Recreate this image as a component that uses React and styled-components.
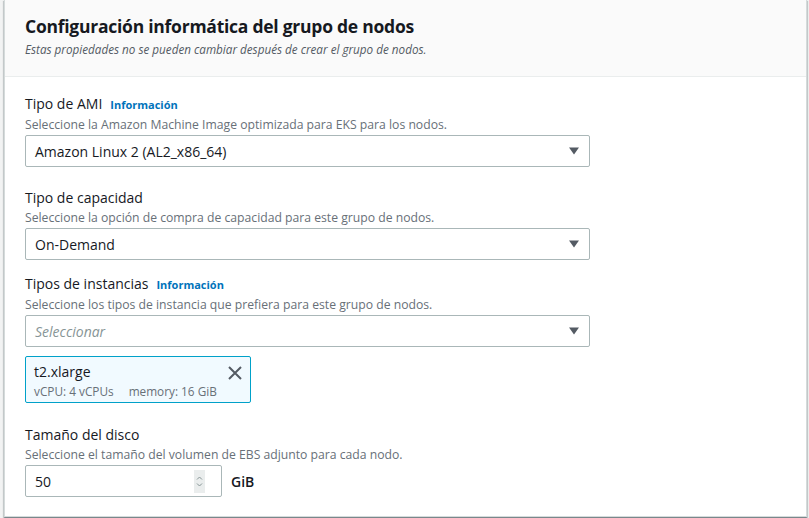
import React from "react";
import styled, { createGlobalStyle } from "styled-components";

const Global = createGlobalStyle`
  html, body { margin: 0; padding: 0; background: #f2f3f3; }
  body { font-family: "Open Sans", "Noto Sans", sans-serif; color: #16191f; }
  * { box-sizing: border-box; }
`;

const Page = styled.div`
  width: 809px;
  height: 518px;
  overflow: hidden;
  padding: 0 2px 0 4px;
`;

const Panel = styled.section`
  background: #fff;
  border: 1px solid #d5dbdb;
  border-top: none;
  box-shadow: 0 1px 1px 0 rgba(0, 28, 36, 0.3), 1px 1px 1px 0 rgba(0, 28, 36, 0.15),
    -1px 1px 1px 0 rgba(0, 28, 36, 0.15);
  height: 517px;
`;

const Header = styled.header`
  background: #fafafa;
  border-bottom: 1px solid #eaeded;
  padding: 15px 20px 19px;
`;

const Title = styled.h2`
  margin: 0;
  font-size: 17.5px;
  line-height: 22px;
  font-weight: 700;
  letter-spacing: -0.25px;
  color: #16191f;
`;

const Subtitle = styled.p`
  margin: 4px 0 0;
  font-size: 11.7px;
  line-height: 16px;
  font-style: italic;
  color: #545b64;
`;

const Body = styled.div`
  padding: 17px 20px 0;
`;

const Field = styled.div`
  margin-top: ${(p) => p.$gap || 0}px;
`;

const LabelRow = styled.div`
  display: flex;
  align-items: baseline;
  gap: 8px;
  font-size: 14px;
  line-height: 20px;
`;

const Label = styled.span`
  color: #16191f;
`;

const Info = styled.a`
  color: #0073bb;
  font-weight: 700;
  font-size: 11px;
  text-decoration: none;
`;

const Desc = styled.div`
  margin-top: 2px;
  font-size: 12.2px;
  line-height: 16px;
  color: #687078;
`;

const Select = styled.div`
  margin-top: 2px;
  width: 565px;
  height: 32px;
  border: 1px solid #aab7b8;
  border-radius: 2px;
  display: flex;
  align-items: center;
  justify-content: space-between;
  padding: 0 9px 0 9px;
  font-size: 14px;
  color: ${(p) => (p.$placeholder ? "#879596" : "#16191f")};
  font-style: ${(p) => (p.$placeholder ? "italic" : "normal")};
`;

const Arrow = () => (
  <svg width="12" height="8" viewBox="0 0 12 8">
    <path d="M1 0.5h10L6 7.5z" fill="#545b64" />
  </svg>
);

const Token = styled.div`
  margin-top: 9px;
  width: 226px;
  height: 47px;
  background: #f1faff;
  border: 1px solid #00a1c9;
  border-radius: 2px;
  padding: 4px 8px 0 8px;
  display: flex;
  justify-content: space-between;
  align-items: flex-start;
`;

const TokenText = styled.div`
  display: flex;
  flex-direction: column;
`;

const TokenName = styled.div`
  font-size: 14px;
  line-height: 22px;
  color: #16191f;
`;

const TokenMeta = styled.div`
  display: flex;
  gap: 15px;
  font-size: 11.8px;
  line-height: 16px;
  color: #687078;
`;

const Dismiss = styled.button`
  border: none;
  background: none;
  padding: 0;
  margin-top: 5px;
  display: flex;
`;

const InputRow = styled.div`
  margin-top: 2px;
  display: flex;
  align-items: center;
  gap: 9px;
`;

const NumberBox = styled.div`
  width: 197px;
  height: 32px;
  border: 1px solid #aab7b8;
  border-radius: 2px;
  display: flex;
  align-items: center;
  justify-content: space-between;
  padding: 0 16px 0 9px;
  font-size: 14px;
`;

const Spinner = styled.div`
  width: 11px;
  height: 23px;
  background: #eaeded;
  display: flex;
  align-items: center;
  justify-content: center;
`;

const Unit = styled.span`
  font-size: 14px;
  color: #16191f;
  font-weight: 600;
`;

export default function App() {
  return (
    <Page>
      <Global />
      <Panel>
        <Header>
          <Title>Configuración informática del grupo de nodos</Title>
          <Subtitle>
            Estas propiedades no se pueden cambiar después de crear el grupo de nodos.
          </Subtitle>
        </Header>
        <Body>
          <Field>
            <LabelRow>
              <Label>Tipo de AMI</Label>
              <Info href="#">Información</Info>
            </LabelRow>
            <Desc>Seleccione la Amazon Machine Image optimizada para EKS para los nodos.</Desc>
            <Select>
              <span>Amazon Linux 2 (AL2_x86_64)</span>
              <Arrow />
            </Select>
          </Field>
          <Field $gap={21}>
            <LabelRow>
              <Label>Tipo de capacidad</Label>
            </LabelRow>
            <Desc>Seleccione la opción de compra de capacidad para este grupo de nodos.</Desc>
            <Select>
              <span>On-Demand</span>
              <Arrow />
            </Select>
          </Field>
          <Field $gap={14}>
            <LabelRow>
              <Label>Tipos de instancias</Label>
              <Info href="#">Información</Info>
            </LabelRow>
            <Desc>Seleccione los tipos de instancia que prefiera para este grupo de nodos.</Desc>
            <Select $placeholder>
              <span>Seleccionar</span>
              <Arrow />
            </Select>
            <Token>
              <TokenText>
                <TokenName>t2.xlarge</TokenName>
                <TokenMeta>
                  <span>vCPU: 4 vCPUs</span>
                  <span>memory: 16 GiB</span>
                </TokenMeta>
              </TokenText>
              <Dismiss aria-label="Eliminar">
                <svg width="14" height="14" viewBox="0 0 14 14">
                  <path d="M1 1l12 12M13 1L1 13" stroke="#545b64" strokeWidth="2" fill="none" />
                </svg>
              </Dismiss>
            </Token>
          </Field>
          <Field $gap={22}>
            <LabelRow>
              <Label>Tamaño del disco</Label>
            </LabelRow>
            <Desc>Seleccione el tamaño del volumen de EBS adjunto para cada nodo.</Desc>
            <InputRow>
              <NumberBox>
                <span>50</span>
                <Spinner>
                  <svg width="7" height="13" viewBox="0 0 7 13">
                    <path d="M1 4.5l2.5-2.5L6 4.5M1 8.5l2.5 2.5L6 8.5" stroke="#879596" strokeWidth="1" fill="none" />
                  </svg>
                </Spinner>
              </NumberBox>
              <Unit>GiB</Unit>
            </InputRow>
          </Field>
        </Body>
      </Panel>
    </Page>
  );
}
